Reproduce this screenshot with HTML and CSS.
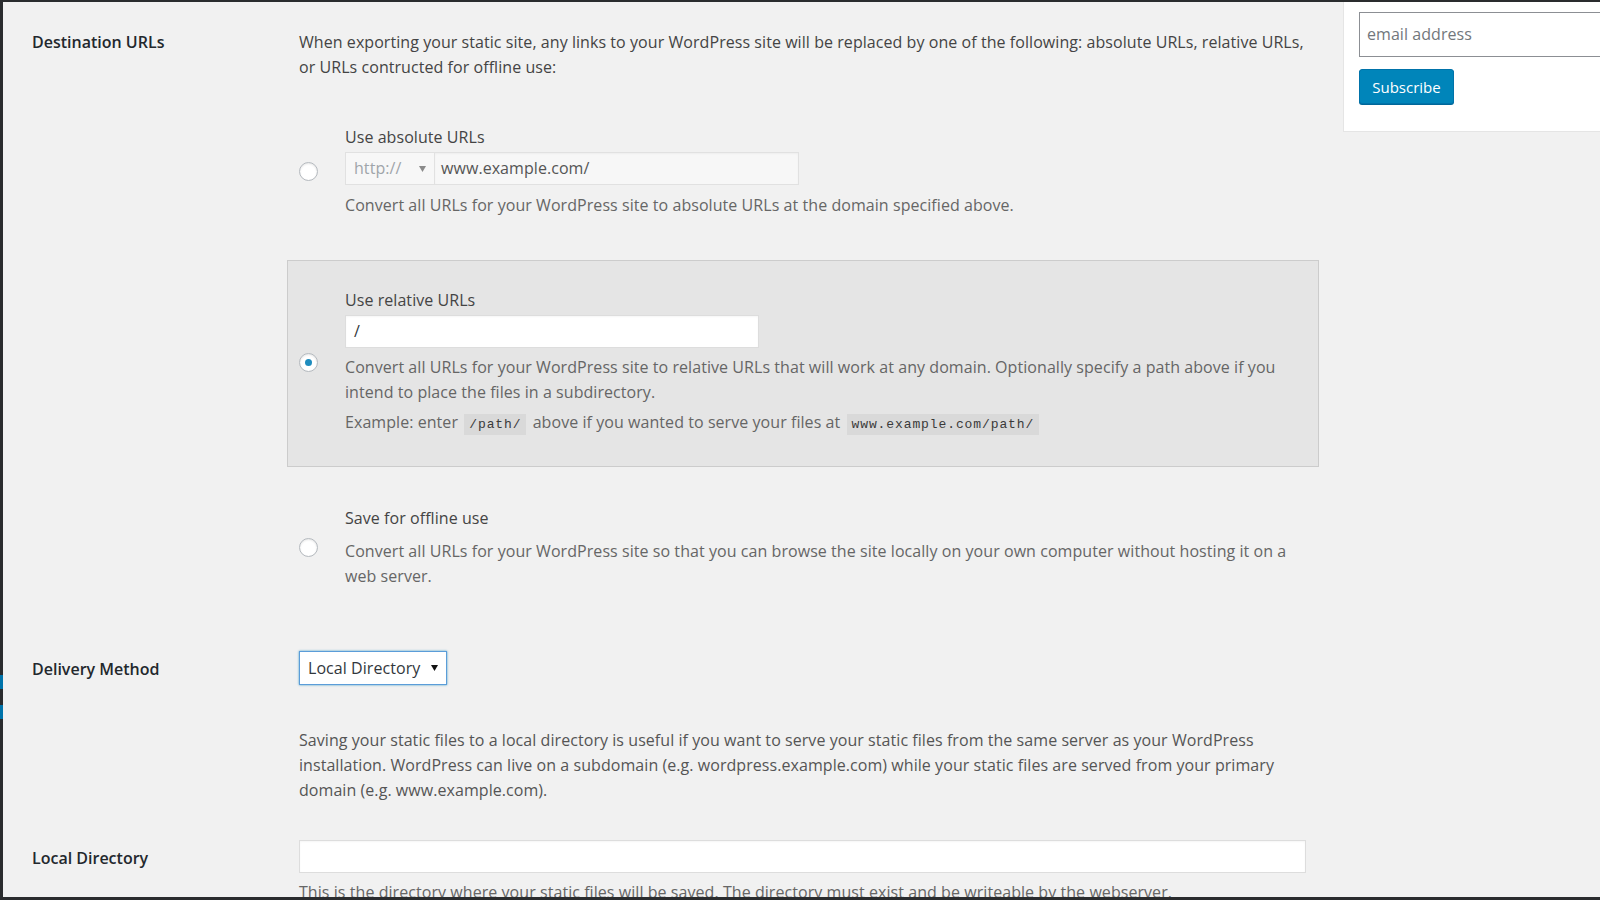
FILE: index.html
```html
<!DOCTYPE html>
<html lang="en">
<head>
    <meta charset="UTF-8">
    <title>Static export settings</title>
    <link rel="stylesheet" href="styles.css">
</head>
<body>
    <div class="frame">
        <div class="edge">
            <span class="edge-dark edge-top"></span>
            <span class="edge-blue"></span>
            <span class="edge-dark edge-gap"></span>
            <span class="edge-blue"></span>
            <span class="edge-dark edge-rest"></span>
        </div>
        <div class="screen">
            <div class="wrap">
                <main class="settings">
                    <div class="label">Destination URLs</div>
                    <div class="field">
                        <p class="intro">When exporting your static site, any links to your WordPress site will be replaced by one of the following: absolute URLs, relative URLs, or URLs contructed for offline use:</p>

                        <div class="option option-first">
                            <span class="radio"></span>
                            <div class="option-body">
                                <div class="option-title">Use absolute URLs</div>
                                <div class="url-row">
                                    <div class="select select-disabled">
                                        <span>http://</span>
                                        <svg class="caret" width="7" height="6" viewBox="0 0 7 6"><path d="M0 0h7L3.5 6z" fill="#8a8a8a"/></svg>
                                    </div>
                                    <div class="input input-disabled input-domain">www.example.com/</div>
                                </div>
                                <p class="option-desc">Convert all URLs for your WordPress site to absolute URLs at the domain specified above.</p>
                            </div>
                        </div>

                        <div class="option option-active">
                            <span class="radio radio-checked"></span>
                            <div class="option-body">
                                <div class="option-title">Use relative URLs</div>
                                <div class="input input-path">/</div>
                                <p class="option-desc">Convert all URLs for your WordPress site to relative URLs that will work at any domain. Optionally specify a path above if you intend to place the files in a subdirectory.</p>
                                <p class="option-example">Example: enter <code>/path/</code> above if you wanted to serve your files at <code>www.example.com/path/</code></p>
                            </div>
                        </div>

                        <div class="option option-last">
                            <span class="radio"></span>
                            <div class="option-body">
                                <div class="option-title">Save for offline use</div>
                                <p class="option-desc">Convert all URLs for your WordPress site so that you can browse the site locally on your own computer without hosting it on a web server.</p>
                            </div>
                        </div>
                    </div>

                    <div class="label label-control row-delivery">Delivery Method</div>
                    <div class="field row-delivery">
                        <div class="select select-focus">
                            <span>Local Directory</span>
                            <svg class="caret" width="7" height="6" viewBox="0 0 7 6"><path d="M0 0h7L3.5 6z" fill="#111"/></svg>
                        </div>
                        <p class="help">Saving your static files to a local directory is useful if you want to serve your static files from the same server as your WordPress installation. WordPress can live on a subdomain (e.g. wordpress.example.com) while your static files are served from your primary domain (e.g. www.example.com).</p>
                    </div>

                    <div class="label label-control row-local">Local Directory</div>
                    <div class="field row-local">
                        <div class="input input-wide"></div>
                        <p class="option-desc dir-desc">This is the directory where your static files will be saved. The directory must exist and be writeable by the webserver.</p>
                    </div>
                </main>

                <aside class="sidebar">
                    <div class="email">email address</div>
                    <button class="subscribe" type="button">Subscribe</button>
                </aside>
            </div>
        </div>
    </div>
</body>
</html>
```

FILE: styles.css
```css
* {
    box-sizing: border-box;
    margin: 0;
    padding: 0;
}
html, body {
    height: 900px;
    overflow: hidden;
}
body {
    font-family: "Open Sans", "Noto Sans", sans-serif;
    font-size: 16px;
    line-height: 25px;
    letter-spacing: 0.06px;
    color: #444;
    background-color: #f1f1f1;
}
.frame {
    display: flex;
    height: 900px;
}
.edge {
    flex: 0 0 3px;
    display: flex;
    flex-direction: column;
}
.edge-dark {
    background-color: #2a2c2e;
}
.edge-top {
    height: 675px;
}
.edge-blue {
    height: 14px;
    background-color: #0073aa;
}
.edge-gap {
    height: 16px;
}
.edge-rest {
    flex: 1;
}
.screen {
    flex: 1;
    border-top: 2px solid #2a2c2e;
    border-bottom: 3px solid #2a2c2e;
    overflow: hidden;
}
.wrap {
    display: flex;
    align-items: flex-start;
    width: 1640px;
}

/* form table */
.settings {
    flex: 0 0 1340px;
    display: grid;
    grid-template-columns: 267px 1007px;
    padding: 28px 0 0 29px;
}
.label {
    font-size: 16px;
    font-weight: 600;
    letter-spacing: 0;
    color: #23282d;
}
.label-control {
    padding-top: 6px;
}
.row-delivery {
    margin-top: 62px;
}
.row-local {
    margin-top: 37px;
}
.intro {
    color: #444;
}
.option {
    display: flex;
    align-items: center;
}
.option-first {
    margin-top: 45px;
}
.option-active {
    margin: 42px -13px 0 -12px;
    padding: 27px 12px 29px;
    background-color: #e5e5e5;
    border: 1px solid #ccc;
}
.option-last {
    margin-top: 39px;
}
.radio {
    flex: 0 0 19px;
    width: 19px;
    height: 19px;
    margin: 0 27px 0 0;
    border: 1px solid #b4b9be;
    border-radius: 50%;
    background-color: #fff;
    box-shadow: inset 0 1px 2px rgba(0, 0, 0, 0.1);
    display: flex;
    align-items: center;
    justify-content: center;
}
.radio-checked::after {
    content: "";
    width: 7px;
    height: 7px;
    border-radius: 50%;
    background-color: #1e8cbe;
}
.option-active .radio {
    margin-left: -1px;
}
.option-body {
    flex: 1;
}
.option-title {
    color: #444;
}
.option-desc {
    margin-top: 8px;
    color: #666;
}
.option-active .option-desc {
    margin-top: 7px;
}
.option-example {
    margin-top: 5px;
    color: #666;
}
code {
    font-family: "Liberation Mono", "DejaVu Sans Mono", monospace;
    font-size: 13px;
    letter-spacing: 0.9px;
    padding: 3px 5px 3px;
    margin: 0 2px;
    background-color: #d9d9d9;
    color: #3a3a3a;
}

/* controls */
.url-row {
    display: flex;
    margin-top: 2px;
}
.select {
    display: flex;
    align-items: center;
    justify-content: space-between;
    height: 33px;
    padding: 0 8px 0 8px;
    border: 1px solid #ddd;
}
.select-disabled {
    width: 90px;
    background-color: #f7f7f7;
    color: #a0a5aa;
    border-color: #e1e1e1;
}
.input {
    height: 33px;
    padding: 0 6px;
    line-height: 31px;
    border: 1px solid #ddd;
    background-color: #fff;
    color: #32373c;
    box-shadow: inset 0 1px 2px rgba(0, 0, 0, 0.04);
}
.input-disabled {
    background-color: #f7f7f7;
    border-color: #e1e1e1;
    color: #555;
}
.input-domain {
    width: 364px;
    border-left: 0;
}
.input-path {
    width: 414px;
    margin-top: 2px;
    padding-left: 8px;
}
.input-wide {
    width: 1007px;
    height: 33px;
}
.select-focus {
    width: 148px;
    height: 34px;
    background-color: #fff;
    color: #32373c;
    border-color: #5b9dd9;
    box-shadow: 0 0 2px rgba(30, 140, 190, 0.8);
}
.help {
    margin-top: 43px;
    color: #555;
}
.dir-desc {
    margin-top: 7px;
    white-space: nowrap;
}

/* sidebar */
.sidebar {
    flex: 0 0 300px;
    background-color: #fff;
    border-left: 1px solid #e5e5e5;
    border-bottom: 1px solid #e5e5e5;
    padding: 10px 0 26px 15px;
    margin-top: -2px;
    height: 132px;
}
.email {
    width: 300px;
    height: 45px;
    padding: 0 7px;
    margin-top: 2px;
    border: 1px solid #8c8f94;
    font-size: 16px;
    line-height: 43px;
    color: #72777c;
}
.subscribe {
    display: block;
    margin-top: 12px;
    width: 95px;
    height: 35px;
    font-family: "Open Sans", "Noto Sans", sans-serif;
    font-size: 15px;
    color: #fff;
    background-color: #0085ba;
    border: 1px solid #0073aa;
    border-radius: 3px;
    box-shadow: 0 1px 0 #006799;
}
```
